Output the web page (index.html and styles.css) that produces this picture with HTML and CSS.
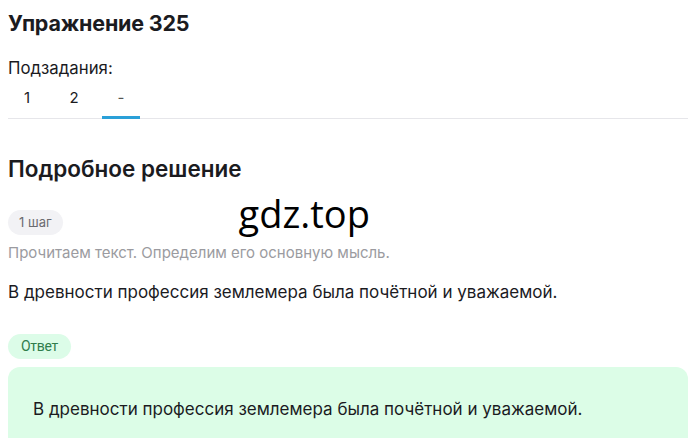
FILE: index.html
```html
<!DOCTYPE html>
<html lang="ru">
<head>
<meta charset="utf-8">
<link rel="stylesheet" href="styles.css">
</head>
<body>
<div class="page">
  <h1 class="title">Упражнение 325</h1>
  <div class="sub-label">Подзадания:</div>
  <div class="tabs">
    <span class="tab">1</span>
    <span class="tab">2</span>
    <span class="tab active">-</span>
  </div>
  <h2 class="section">Подробное решение</h2>
  <div class="step-row">
    <span class="pill step">1 шаг</span>
    <span class="watermark">gdz.top</span>
  </div>
  <p class="hint">Прочитаем текст. Определим его основную мысль.</p>
  <p class="body">В древности профессия землемера была почётной и уважаемой.</p>
  <span class="pill answer-pill">Ответ</span>
  <div class="answer-box">
    <p class="answer-text">В древности профессия землемера была почётной и уважаемой.</p>
  </div>
</div>
</body>
</html>
```
FILE: styles.css
```css
html, body {
  margin: 0;
  padding: 0;
  background: #ffffff;
  overflow: hidden;
}
.page {
  padding: 0 12px 0 8px;
  font-family: "Inter", "DejaVu Sans", sans-serif;
  color: #1b1b1f;
}
.title {
  margin: 0;
  padding-top: 9px;
  font-size: 21.5px;
  line-height: 28px;
  font-weight: 700;
  letter-spacing: -0.2px;
}
.sub-label {
  margin-top: 21px;
  font-size: 16.8px;
  line-height: 20px;
}
.tabs {
  display: flex;
  gap: 9px;
  margin-top: 9px;
  border-bottom: 1px solid #e6e6ea;
  height: 31px;
}
.tab {
  width: 38px;
  text-align: center;
  font-size: 15px;
  line-height: 22px;
  box-sizing: border-box;
}
.tab.active {
  border-bottom: 3px solid #2aa0d8;
  height: 32px;
  color: #555;
}
.section {
  margin: 36px 0 0;
  font-size: 22.5px;
  line-height: 28px;
  font-weight: 600;
}
.step-row {
  display: flex;
  align-items: center;
  margin-top: 19px;
  height: 40px;
}
.pill {
  display: inline-block;
  border-radius: 13px;
  font-size: 13px;
  line-height: 25px;
  padding: 0 11px;
}
.step {
  background: #f2f2f5;
  color: #6b6b70;
}
.watermark {
  margin-left: 176px;
  font-family: "Open Sans", "DejaVu Sans", sans-serif;
  font-size: 38px;
  line-height: 40px;
  color: #000;
  margin-top: -18px;
}
.hint {
  margin: 1px 0 0;
  font-size: 15px;
  line-height: 20px;
  color: #9b9ba0;
}
.body {
  margin: 17px 0 0;
  font-size: 17px;
  line-height: 24px;
  color: #1b1b1f;
}
.answer-pill {
  margin-top: 30px;
  background: #dcfce8;
  color: #2f7d4c;
  font-family: "Roboto", sans-serif;
  font-size: 14px;
  letter-spacing: -0.3px;
  padding: 0 13px;
}
.answer-box {
  margin-top: 8px;
  background: #dcfde7;
  border-radius: 12px;
  padding: 30px 16px 30px 25px;
}
.answer-text {
  margin: 0;
  font-size: 17px;
  line-height: 24px;
  color: #1b1b1f;
}
```
